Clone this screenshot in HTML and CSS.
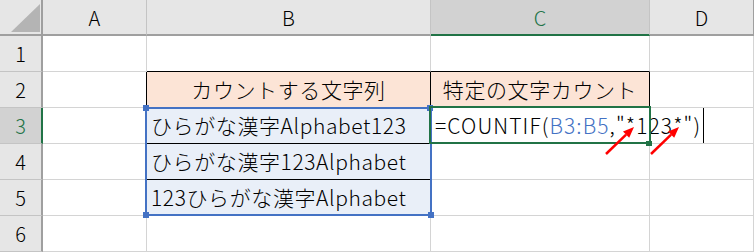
FILE: index.html
```html
<!DOCTYPE html>
<html lang="ja">
<head>
<meta charset="utf-8">
<link rel="stylesheet" href="styles.css">
</head>
<body>
<div class="sheet">
  <div class="corner"><svg width="29" height="28" viewBox="0 0 29 28"><polygon points="0,28 29,28 29,0" fill="#b4b4b4"/></svg></div>
  <div class="colh">A</div>
  <div class="colh">B</div>
  <div class="colh sel">C</div>
  <div class="colh last">D</div>

  <div class="rowh">1</div>
  <div class="cell"></div>
  <div class="cell bb"></div>
  <div class="cell bb"></div>
  <div class="cell"></div>

  <div class="rowh">2</div>
  <div class="cell br"></div>
  <div class="cell hdr">カウントする文字列</div>
  <div class="cell hdr">特定の文字カウント</div>
  <div class="cell"></div>

  <div class="rowh sel">3</div>
  <div class="cell br"></div>
  <div class="cell data">ひらがな漢字Alphabet123</div>
  <div class="cell formula">=COUNTIF(<span class="ref">B3:B5</span>,"*123*")</div>
  <div class="cell"></div>

  <div class="rowh">4</div>
  <div class="cell br"></div>
  <div class="cell data">ひらがな漢字123Alphabet</div>
  <div class="cell"></div>
  <div class="cell"></div>

  <div class="rowh">5</div>
  <div class="cell br"></div>
  <div class="cell data">123ひらがな漢字Alphabet</div>
  <div class="cell"></div>
  <div class="cell"></div>

  <div class="rowh">6</div>
  <div class="cell"></div>
  <div class="cell"></div>
  <div class="cell"></div>
  <div class="cell"></div>

  <div class="range"></div>
  <div class="handle h-tl"></div>
  <div class="handle h-tr"></div>
  <div class="handle h-bl"></div>
  <div class="handle h-br"></div>
  <div class="active"></div>
  <div class="fill-handle"></div>
  <div class="caret"></div>
  <svg class="arrows" width="754" height="252" viewBox="0 0 754 252">
    <line x1="606" y1="154" x2="626.1" y2="134.6" stroke="#ff0000" stroke-width="2.5"/>
    <polygon points="634,127 629.2,137.8 623,131.4" fill="#ff0000"/>
    <line x1="651" y1="154" x2="671.1" y2="134.6" stroke="#ff0000" stroke-width="2.5"/>
    <polygon points="679,127 674.2,137.8 668,131.4" fill="#ff0000"/>
  </svg>
</div>
</body>
</html>
```

FILE: styles.css
```css
html, body {
  margin: 0;
  padding: 0;
  background: #ffffff;
}

.sheet {
  position: relative;
  width: 754px;
  height: 252px;
  display: grid;
  grid-template-columns: 43px 104px 284px 219px 104px;
  grid-template-rows: repeat(7, 36px);
  font-family: "Noto Sans CJK JP", "Noto Sans", sans-serif;
  color: #000;
  overflow: hidden;
}

.sheet > div {
  box-sizing: border-box;
}

.corner {
  background: #e6e6e6;
  border-right: 2px solid #9f9f9f;
  border-bottom: 2px solid #9f9f9f;
  display: flex;
  justify-content: flex-end;
  align-items: flex-end;
  padding: 0 1px 2px 0;
}

.corner svg {
  display: block;
}

.colh {
  background: #e6e6e6;
  border-right: 1px solid #c4c4c4;
  border-bottom: 2px solid #9f9f9f;
  display: flex;
  align-items: center;
  justify-content: center;
  font-size: 20px;
  font-weight: 300;
  line-height: 1;
  padding-top: 1px;
}

.colh.sel {
  background: #d2d2d2;
  color: #217346;
  border-bottom-color: #217346;
}

.colh.last {
  border-right-color: #9f9f9f;
}

.rowh {
  background: #e6e6e6;
  border-right: 2px solid #9f9f9f;
  border-bottom: 1px solid #c4c4c4;
  display: flex;
  align-items: center;
  justify-content: center;
  font-size: 20px;
  font-weight: 300;
  line-height: 1;
}

.rowh.sel {
  background: #d2d2d2;
  color: #217346;
  border-right-color: #217346;
}

.cell {
  border-right: 1px solid #d4d4d4;
  border-bottom: 1px solid #d4d4d4;
  font-size: 21px;
  font-weight: 300;
  letter-spacing: 0.6px;
  line-height: 1;
  display: flex;
  align-items: center;
  white-space: nowrap;
}

.cell.bb {
  border-bottom-color: #000;
}

.cell.br {
  border-right-color: #000;
}

.cell.hdr {
  background: #fce4d6;
  border-right-color: #000;
  border-bottom-color: #000;
  justify-content: center;
}

.cell.data {
  background: #e9eff8;
  border-right-color: #000;
  border-bottom-color: #000;
  padding-left: 4px;
}

.cell.formula {
  padding-left: 4px;
  letter-spacing: 1.1px;
  overflow: visible;
  position: relative;
  z-index: 1;
}

.ref {
  color: #4472c4;
}

.range {
  position: absolute;
  left: 145px;
  top: 107px;
  width: 287px;
  height: 109px;
  border: 2px solid #4472c4;
  box-sizing: border-box;
}

.handle {
  position: absolute;
  width: 6px;
  height: 6px;
  background: #4472c4;
}

.h-tl { left: 143px; top: 105px; }
.h-tr { left: 427px; top: 105px; }
.h-bl { left: 143px; top: 212px; }
.h-br { left: 428px; top: 212px; }

.active {
  position: absolute;
  left: 429px;
  top: 106px;
  width: 222px;
  height: 38px;
  border: 2px solid #217346;
  box-sizing: border-box;
  z-index: 2;
}

.fill-handle {
  position: absolute;
  left: 646px;
  top: 141px;
  width: 6px;
  height: 5px;
  background: #217346;
  z-index: 3;
}

.caret {
  position: absolute;
  left: 703px;
  top: 108px;
  width: 1px;
  height: 35px;
  background: #000;
  z-index: 3;
}

.arrows {
  position: absolute;
  left: 0;
  top: 0;
  z-index: 4;
  pointer-events: none;
}
```
